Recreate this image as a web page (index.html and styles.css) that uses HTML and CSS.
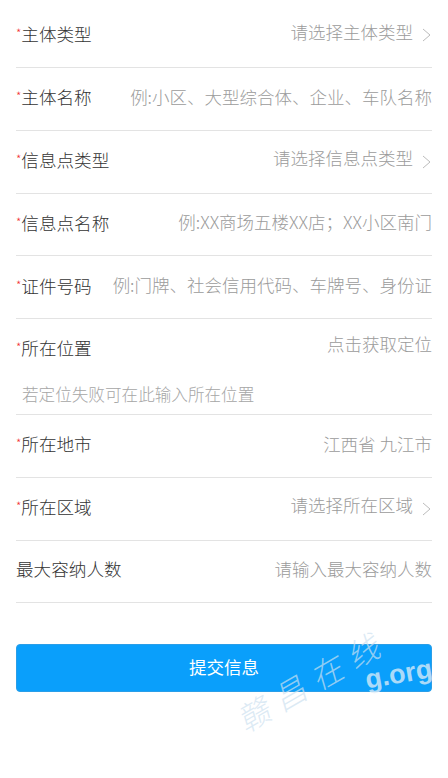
FILE: index.html
```html
<!DOCTYPE html>
<html lang="zh-CN">
<head>
<meta charset="utf-8">
<link rel="stylesheet" href="styles.css">
</head>
<body>
<div class="page">
  <div class="form">
    <div class="row first">
      <div class="label"><span class="star">*</span>主体类型</div>
      <div class="value select">请选择主体类型<svg class="chev" viewBox="0 0 10 14" width="10" height="14"><polyline points="1,1 8,7 1,13"/></svg></div>
    </div>
    <div class="row">
      <div class="label"><span class="star">*</span>主体名称</div>
      <div class="value input">例:小区、大型综合体、企业、车队名称</div>
    </div>
    <div class="row">
      <div class="label"><span class="star">*</span>信息点类型</div>
      <div class="value select">请选择信息点类型<svg class="chev" viewBox="0 0 10 14" width="10" height="14"><polyline points="1,1 8,7 1,13"/></svg></div>
    </div>
    <div class="row">
      <div class="label"><span class="star">*</span>信息点名称</div>
      <div class="value input">例:XX商场五楼XX店；XX小区南门</div>
    </div>
    <div class="row">
      <div class="label"><span class="star">*</span>证件号码</div>
      <div class="value input tight">例:门牌、社会信用代码、车牌号、身份证</div>
    </div>
    <div class="loc">
      <div class="loc-top">
        <div class="label"><span class="star">*</span>所在位置</div>
        <div class="value locate">点击获取定位</div>
      </div>
      <div class="loc-hint">若定位失败可在此输入所在位置</div>
    </div>
    <div class="row">
      <div class="label"><span class="star">*</span>所在地市</div>
      <div class="value">江西省 九江市</div>
    </div>
    <div class="row">
      <div class="label"><span class="star">*</span>所在区域</div>
      <div class="value select">请选择所在区域<svg class="chev" viewBox="0 0 10 14" width="10" height="14"><polyline points="1,1 8,7 1,13"/></svg></div>
    </div>
    <div class="row">
      <div class="label">最大容纳人数</div>
      <div class="value">请输入最大容纳人数</div>
    </div>
    <div class="submit-wrap">
      <button class="submit">提交信息</button>
    </div>
  </div>
  <div class="watermark">
    <span class="wm-cn">赣昌在线</span>
    <span class="wm-en">g.org</span>
  </div>
</div>
</body>
</html>
```
FILE: styles.css
```css
html, body {
  margin: 0;
  padding: 0;
  background: #ffffff;
}
body {
  font-family: "Noto Sans CJK SC", "Noto Sans", sans-serif;
  font-weight: 300;
  color: #333333;
  width: 448px;
  height: 778px;
  overflow: hidden;
}
.page {
  position: relative;
  height: 778px;
}
.form {
  padding: 0 16px;
}
.row {
  display: flex;
  align-items: center;
  height: 62.75px;
  box-sizing: border-box;
  padding-bottom: 4px;
  border-bottom: 1px solid #e3e3e3;
}
.row.first {
  height: 68px;
  padding-bottom: 1px;
}
.label {
  flex: none;
  font-size: 17.6px;
  line-height: 24px;
  color: #333333;
  white-space: nowrap;
}
.star {
  color: #f23030;
  font-size: 12px;
  vertical-align: 3px;
  margin-right: 0;
}
.value {
  flex: 1;
  min-width: 0;
  margin-left: 16px;
  font-size: 17.5px;
  line-height: 24px;
  color: #9b9b9b;
  text-align: right;
  white-space: nowrap;
  overflow: hidden;
}
.value.tight {
  margin-left: 15px;
  font-size: 17.5px;
}
.value.select {
  display: flex;
  justify-content: flex-end;
  align-items: center;
  margin-top: -3px;
}
.chev {
  flex: none;
  margin-left: 9px;
  margin-top: 7px;
  fill: none;
  stroke: #bcbcbc;
  stroke-width: 1;
}
.value.locate {
  margin-top: -8px;
}
.loc {
  border-bottom: 1px solid #e3e3e3;
  height: 96px;
  box-sizing: border-box;
}
.loc-top {
  display: flex;
  align-items: center;
  height: 57px;
}
.loc-hint {
  height: 37px;
  display: flex;
  align-items: center;
  padding-left: 6px;
  font-size: 16.6px;
  color: #a6a6a6;
  margin-top: -1px;
}
.submit-wrap {
  padding-top: 41px;
}
.submit {
  display: block;
  width: 100%;
  height: 48px;
  border: 1px solid #2a9ee8;
  border-radius: 4px;
  background: #0a9ffb;
  color: #ffffff;
  font-family: "Noto Sans CJK SC", "Noto Sans", sans-serif;
  font-weight: 400;
  font-size: 17.5px;
  padding: 0 0 4px;
  cursor: pointer;
}
.watermark {
  position: absolute;
  left: 250px;
  top: 655px;
  width: 190px;
  height: 100px;
  pointer-events: none;
}
.wm-cn {
  position: absolute;
  left: 0;
  top: 40px;
  font-size: 32px;
  letter-spacing: 10px;
  color: rgba(205, 225, 240, 0.7);
  transform: rotate(-30deg);
  transform-origin: left bottom;
  white-space: nowrap;
  font-style: italic;
}
.wm-en {
  position: absolute;
  left: 115px;
  top: 4px;
  font-family: "Liberation Sans", sans-serif;
  font-size: 27px;
  font-weight: bold;
  color: rgba(225, 238, 248, 0.75);
  transform: rotate(-10deg);
  white-space: nowrap;
}
```
